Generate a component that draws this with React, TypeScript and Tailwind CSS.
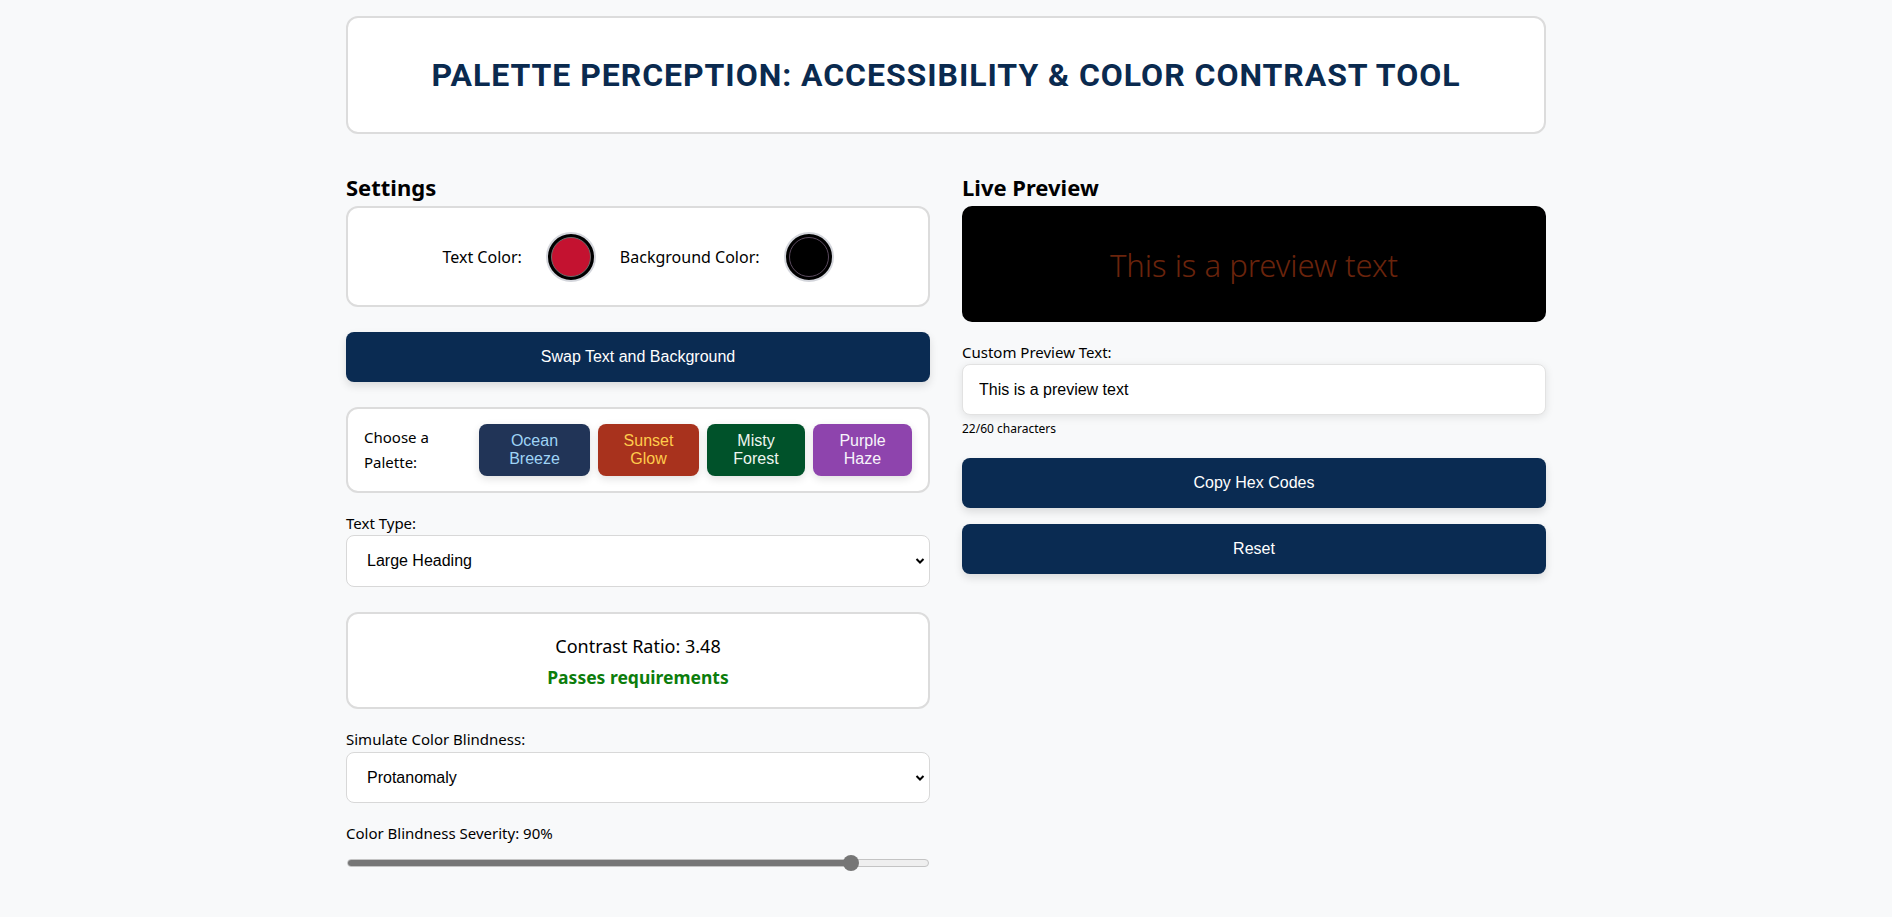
import React from "react";

function Chevron() {
  return (
    <svg
      className="pointer-events-none absolute right-[5px] top-1/2 -translate-y-1/2"
      width="10"
      height="7"
      viewBox="0 0 10 7"
    >
      <polyline points="1.5,1.5 5,5 8.5,1.5" fill="none" stroke="#000" strokeWidth="2" />
    </svg>
  );
}

function Swatch({ color, ring }: { color: string; ring: string }) {
  return (
    <div className="flex h-[50px] w-[50px] items-center justify-center rounded-full border-2 border-[#d4d6dc] bg-black p-[3px]">
      <div className={`h-full w-full rounded-full border ${ring}`} style={{ backgroundColor: color }} />
    </div>
  );
}

export default function App() {
  return (
    <div className="min-h-screen bg-[#f8f9fa] font-['Noto_Sans',sans-serif] text-black">
      <div className="mx-auto w-[1200px] pt-4">
        <header className="flex h-[118px] items-center justify-center rounded-[12px] border-2 border-[#dcdcdc] bg-white">
          <h1 className="font-['Roboto',sans-serif] text-[32px] font-bold uppercase leading-none tracking-[0.95px] text-[#0a2a4f]">
            Palette Perception: Accessibility &amp; Color Contrast Tool
          </h1>
        </header>

        <div className="mt-[40px] grid grid-cols-2 gap-x-8">
          {/* Left column */}
          <section className="flex flex-col">
            <h2 className="mb-[6px] text-[22px] font-bold leading-[26px]">Settings</h2>
            <div className="flex h-[101px] items-center justify-center gap-6 rounded-[12px] border-2 border-[#dcdcdc] bg-white">
              <span className="text-[16px]">Text Color:</span>
              <Swatch color="#c41230" ring="border-[#6b6b6b]" />
              <span className="text-[16px]">Background Color:</span>
              <Swatch color="#000000" ring="border-[#5a4a5e]" />
            </div>

            <button className="mt-[25px] h-[50px] w-full rounded-[8px] bg-[#0a2b52] font-['Liberation_Sans',Arial,sans-serif] text-[16px] text-white shadow-[0_4px_8px_rgba(0,0,0,0.12)]">
              Swap Text and Background
            </button>

            <div className="mt-[25px] flex h-[86px] items-center gap-2 rounded-[12px] border-2 border-[#dcdcdc] bg-white px-4">
              <span className="flex-1 text-[15px] leading-[25px]">Choose a Palette:</span>
              <button className="h-[52px] w-[111px] rounded-[8px] bg-[#213457] font-['Liberation_Sans',Arial,sans-serif] text-[16px] leading-[18px] text-[#9fd3f5] shadow-[0_3px_8px_rgba(0,0,0,0.12)]">
                Ocean
                <br />
                Breeze
              </button>
              <button className="h-[52px] w-[101px] rounded-[8px] bg-[#a8321d] font-['Liberation_Sans',Arial,sans-serif] text-[16px] leading-[18px] text-[#ffcb4c] shadow-[0_3px_8px_rgba(0,0,0,0.12)]">
                Sunset
                <br />
                Glow
              </button>
              <button className="h-[52px] w-[98px] rounded-[8px] bg-[#00522a] font-['Liberation_Sans',Arial,sans-serif] text-[16px] leading-[18px] text-[#eef6f0] shadow-[0_3px_8px_rgba(0,0,0,0.12)]">
                Misty
                <br />
                Forest
              </button>
              <button className="h-[52px] w-[99px] rounded-[8px] bg-[#8e44ad] font-['Liberation_Sans',Arial,sans-serif] text-[16px] leading-[18px] text-[#f7f4fa] shadow-[0_3px_8px_rgba(0,0,0,0.12)]">
                Purple
                <br />
                Haze
              </button>
            </div>

            <label className="mt-[19px] mb-px text-[15px] leading-[22px]">Text Type:</label>
            <div className="relative">
              <select
                defaultValue="large"
                className="h-[52px] w-full appearance-none rounded-[8px] border border-[#d8d8d8] bg-white pl-[20px] font-['Liberation_Sans',Arial,sans-serif] text-[16px] text-black outline-none"
              >
                <option value="normal">Normal Text</option>
                <option value="large">Large Heading</option>
              </select>
              <Chevron />
            </div>

            <div className="mt-[25px] flex h-[97px] flex-col items-center justify-center rounded-[12px] border-2 border-[#dcdcdc] bg-white">
              <p className="text-[18px] leading-[26px]">Contrast Ratio: 3.48</p>
              <p className="mt-[6px] text-[17.5px] font-bold leading-[24px] text-[#0c7d0c]">Passes requirements</p>
            </div>

            <label className="mt-[19px] mb-[2px] text-[15px] leading-[22px]">Simulate Color Blindness:</label>
            <div className="relative">
              <select
                defaultValue="protanomaly"
                className="h-[51px] w-full appearance-none rounded-[8px] border border-[#d8d8d8] bg-white pl-[20px] font-['Liberation_Sans',Arial,sans-serif] text-[16px] text-black outline-none"
              >
                <option value="none">None</option>
                <option value="protanomaly">Protanomaly</option>
                <option value="deuteranomaly">Deuteranomaly</option>
                <option value="tritanomaly">Tritanomaly</option>
              </select>
              <Chevron />
            </div>

            <label className="mt-[19px] text-[15px] leading-[22px]">Color Blindness Severity: 90%</label>
            <div className="relative mt-[11px] flex h-4 items-center px-px">
              <div className="h-2 w-full overflow-hidden rounded-full border border-[#c4c4c4] bg-[#efefef]">
                <div className="h-full w-[86%] bg-[#767676]" />
              </div>
              <div className="absolute left-[497px] top-0 h-4 w-4 rounded-full bg-[#767676]" />
            </div>
          </section>

          {/* Right column */}
          <section className="flex flex-col">
            <h2 className="mb-[6px] text-[22px] font-bold leading-[26px]">Live Preview</h2>
            <div className="flex h-[116px] items-center justify-center rounded-[10px] bg-black pt-[3px]">
              <p className="text-[31px] font-light text-[#6b240c]">This is a preview text</p>
            </div>

            <label className="mt-[19px] mb-px text-[15px] leading-[22px]">Custom Preview Text:</label>
            <input
              type="text"
              defaultValue="This is a preview text"
              className="h-[51px] w-full rounded-[8px] border border-[#e2e2e2] bg-white px-4 font-['Liberation_Sans',Arial,sans-serif] text-[16px] text-black shadow-[0_2px_8px_rgba(0,0,0,0.1)] outline-none"
            />
            <p className="mt-[6px] text-[12px] leading-[16px]">22/60 characters</p>

            <button className="mt-[21px] h-[50px] w-full rounded-[8px] bg-[#0a2b52] font-['Liberation_Sans',Arial,sans-serif] text-[16px] text-white shadow-[0_4px_8px_rgba(0,0,0,0.12)]">
              Copy Hex Codes
            </button>
            <button className="mt-4 h-[50px] w-full rounded-[8px] bg-[#0a2b52] font-['Liberation_Sans',Arial,sans-serif] text-[16px] text-white shadow-[0_4px_8px_rgba(0,0,0,0.12)]">
              Reset
            </button>
          </section>
        </div>
      </div>
    </div>
  );
}
